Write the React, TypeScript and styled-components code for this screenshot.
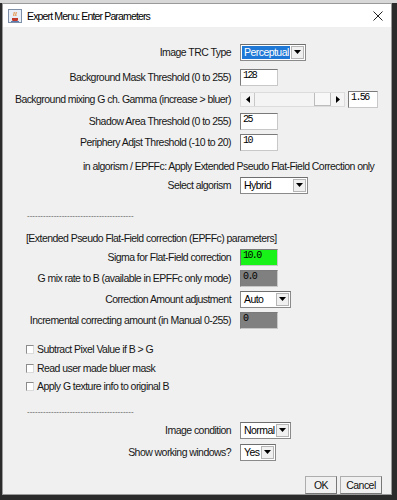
import React from "react";
import styled, { createGlobalStyle } from "styled-components";

const Global = createGlobalStyle`
  html, body { margin: 0; padding: 0; }
  body {
    width: 397px; height: 500px; overflow: hidden;
    background: #2b2b2b;
    font-family: "Liberation Sans", Arial, sans-serif;
  }
`;

const Desktop = styled.div`
  width: 397px;
  height: 500px;
  box-sizing: border-box;
  padding: 3px 5px 5px 2px;
  background: linear-gradient(#d8d8d8 0 3px, #2b2b2b 3px);
`;

const Window = styled.div`
  height: 100%;
  box-sizing: border-box;
  border: 1px solid #9a9a9a;
  background: #f0f0f0;
  display: flex;
  flex-direction: column;
`;

const TitleBar = styled.div`
  height: 24px;
  background: #ffffff;
  display: flex;
  align-items: center;
  padding: 0 8px 0 5px;
  gap: 5px;
  font-size: 10.5px;
  letter-spacing: -0.85px;
  color: #000;
`;

const TitleText = styled.span`
  flex: 1;
`;

const Body = styled.div`
  flex: 1;
  display: flex;
  flex-direction: column;
  padding: 0 9px 0 8px;
  font-size: 10.5px;
  letter-spacing: -0.55px;
  color: #000;
`;

const Row = styled.div<{ $mt: number }>`
  display: grid;
  grid-template-columns: 220px auto;
  column-gap: 9px;
  align-items: center;
  margin-top: ${(p) => p.$mt}px;
  height: 18px;
`;

const Label = styled.span`
  text-align: right;
  white-space: nowrap;
  color: #161616;
`;

const Controls = styled.div`
  display: flex;
  align-items: center;
  gap: 3px;
`;

const TextField = styled.div<{ $bg?: string; $w?: number }>`
  width: ${(p) => p.$w ?? 38}px;
  height: 17px;
  box-sizing: border-box;
  background: ${(p) => p.$bg ?? "#ffffff"};
  border: 1px solid #c8c8c8;
  border-top-color: #7a7a7a;
  border-left-color: #7a7a7a;
  font-family: "Liberation Mono", "DejaVu Sans Mono", monospace;
  font-size: 10px;
  letter-spacing: -1.6px;
  line-height: 12px;
  padding-left: 2px;
  color: #000;
`;

const Combo = styled.div<{ $w: number }>`
  width: ${(p) => p.$w}px;
  height: 17px;
  box-sizing: border-box;
  background: #fff;
  border: 1px solid #8a8a8a;
  border-top-color: #6e6e6e;
  display: flex;
  align-items: stretch;
  padding: 1px;
`;

const ComboValue = styled.span<{ $sel?: boolean }>`
  flex: 1;
  display: flex;
  align-items: center;
  padding-left: 2px;
  background: ${(p) => (p.$sel ? "#1f78d6" : "transparent")};
  color: ${(p) => (p.$sel ? "#ffffff" : "#000")};
  margin-right: 1px;
`;

const ArrowBtn = styled.span`
  width: 13px;
  background: #f0f0f0;
  border: 1px solid #b5b5b5;
  box-sizing: border-box;
  display: flex;
  align-items: center;
  justify-content: center;
`;

const Scroll = styled.div`
  width: 105px;
  height: 15px;
  box-sizing: border-box;
  background: #f4f4f4;
  border: 1px solid #dcdcdc;
  display: flex;
  align-items: stretch;
`;

const ScrollBtn = styled.span`
  width: 13px;
  display: flex;
  align-items: center;
  justify-content: center;
`;

const Track = styled.span`
  flex: 1;
  display: flex;
  justify-content: flex-end;
  border-left: 1px solid #c8c8c8;
`;

const Thumb = styled.span`
  width: 17px;
  background: #f8f8f8;
  border: 1px solid #bcbcbc;
  border-top: none;
  box-sizing: border-box;
`;

const Note = styled.div<{ $mt: number }>`
  margin-top: ${(p) => p.$mt}px;
  padding-left: 72px;
  white-space: nowrap;
  color: #161616;
  height: 16px;
  line-height: 16px;
`;

const Dashes = styled.div<{ $mt: number }>`
  margin-top: ${(p) => p.$mt}px;
  margin-left: 16px;
  font-size: 8px;
  letter-spacing: 0;
  color: #555;
  height: 10px;
  line-height: 10px;
  white-space: nowrap;
`;

const Heading = styled.div<{ $mt: number }>`
  margin-top: ${(p) => p.$mt}px;
  padding-left: 15px;
  white-space: nowrap;
  color: #161616;
  height: 16px;
  line-height: 16px;
`;

const Check = styled.label<{ $mt: number }>`
  margin-top: ${(p) => p.$mt}px;
  display: flex;
  align-items: center;
  gap: 3px;
  padding-left: 15px;
  height: 16px;
  color: #161616;
`;

const Box = styled.span`
  width: 8px;
  height: 9px;
  box-sizing: border-box;
  background: #fff;
  border: 1px solid #8c8c8c;
  border-right-color: #dadada;
  border-bottom-color: #dadada;
`;

const Footer = styled.div`
  display: flex;
  justify-content: flex-end;
  gap: 3px;
  margin-top: 15px;
`;

const Button = styled.div<{ $w: number }>`
  width: ${(p) => p.$w}px;
  height: 18px;
  box-sizing: border-box;
  border: 1px solid #adadad;
  border-right-color: #777;
  border-bottom-color: #777;
  background: #f0f0f0;
  display: flex;
  align-items: center;
  justify-content: center;
  color: #111;
`;

const Arrow = () => (
  <svg width="7" height="4" viewBox="0 0 7 4">
    <path d="M0 0h7L3.5 4z" fill="#000" />
  </svg>
);

const TitleIcon = () => (
  <svg width="14" height="14" viewBox="0 0 14 14">
    <rect x="0.5" y="0.5" width="13" height="13" fill="#e8eef7" stroke="#7f8fa8" />
    <path d="M4 9h6v1.5a2 2 0 0 1-2 2H6a2 2 0 0 1-2-2z" fill="#c0392b" />
    <path d="M6 3c1 1-1 2 0 4M8 3c1 1-1 2 0 4" stroke="#e67e22" strokeWidth="1" fill="none" />
    <rect x="3" y="12" width="8" height="1" fill="#5c7cb0" />
  </svg>
);

const CloseIcon = () => (
  <svg width="10" height="10" viewBox="0 0 10 10">
    <path d="M0.5 0.5l9 9M9.5 0.5l-9 9" stroke="#222" strokeWidth="1" />
  </svg>
);

const ComboBox = ({ value, w, sel }: { value: string; w: number; sel?: boolean }) => (
  <Combo $w={w}>
    <ComboValue $sel={sel}>{value}</ComboValue>
    <ArrowBtn>
      <Arrow />
    </ArrowBtn>
  </Combo>
);

const LeftTri = () => (
  <svg width="4" height="7" viewBox="0 0 4 7">
    <path d="M4 0v7L0 3.5z" fill="#000" />
  </svg>
);
const RightTri = () => (
  <svg width="4" height="7" viewBox="0 0 4 7">
    <path d="M0 0v7L4 3.5z" fill="#000" />
  </svg>
);

const dashes = "-".repeat(40);

export default function App() {
  return (
    <>
      <Global />
      <Desktop>
        <Window>
          <TitleBar>
            <TitleIcon />
            <TitleText>Expert Menu: Enter Parameters</TitleText>
            <CloseIcon />
          </TitleBar>
          <Body>
            <Row $mt={16}>
              <Label>Image TRC Type</Label>
              <Controls>
                <ComboBox value="Perceptual" w={66} sel />
              </Controls>
            </Row>
            <Row $mt={7}>
              <Label>Background Mask Threshold (0 to 255)</Label>
              <Controls>
                <TextField>128</TextField>
              </Controls>
            </Row>
            <Row $mt={4}>
              <Label>Background mixing G ch. Gamma (increase &gt; bluer)</Label>
              <Controls>
                <Scroll>
                  <ScrollBtn>
                    <LeftTri />
                  </ScrollBtn>
                  <Track>
                    <Thumb />
                  </Track>
                  <ScrollBtn>
                    <RightTri />
                  </ScrollBtn>
                </Scroll>
                <TextField $w={30}>1.56</TextField>
              </Controls>
            </Row>
            <Row $mt={4}>
              <Label>Shadow Area Threshold (0 to 255)</Label>
              <Controls>
                <TextField>25</TextField>
              </Controls>
            </Row>
            <Row $mt={3}>
              <Label>Periphery Adjst Threshold (-10 to 20)</Label>
              <Controls>
                <TextField>10</TextField>
              </Controls>
            </Row>
            <Note $mt={7}>in algorism / EPFFc: Apply Extended Pseudo Flat-Field Correction only</Note>
            <Row $mt={2}>
              <Label>Select algorism</Label>
              <Controls>
                <ComboBox value="Hybrid" w={68} />
              </Controls>
            </Row>
            <Dashes $mt={17}>{dashes}</Dashes>
            <Heading $mt={9}>[Extended Pseudo Flat-Field correction (EPFFc) parameters]</Heading>
            <Row $mt={2}>
              <Label>Sigma for Flat-Field correction</Label>
              <Controls>
                <TextField $bg="#19f219">10.0</TextField>
              </Controls>
            </Row>
            <Row $mt={3}>
              <Label>G mix rate to B (available in EPFFc only mode)</Label>
              <Controls>
                <TextField $bg="#808080">0.0</TextField>
              </Controls>
            </Row>
            <Row $mt={3}>
              <Label>Correction Amount adjustment</Label>
              <Controls>
                <ComboBox value="Auto" w={51} />
              </Controls>
            </Row>
            <Row $mt={3}>
              <Label>Incremental correcting amount (in Manual 0-255)</Label>
              <Controls>
                <TextField $bg="#808080">0</TextField>
              </Controls>
            </Row>
            <Check $mt={12}>
              <Box />
              Subtract Pixel Value if B &gt; G
            </Check>
            <Check $mt={3}>
              <Box />
              Read user made bluer mask
            </Check>
            <Check $mt={2}>
              <Box />
              Apply G texture info to original B
            </Check>
            <Dashes $mt={13}>{dashes}</Dashes>
            <Row $mt={4}>
              <Label>Image condition</Label>
              <Controls>
                <ComboBox value="Normal" w={51} />
              </Controls>
            </Row>
            <Row $mt={4}>
              <Label>Show working windows?</Label>
              <Controls>
                <ComboBox value="Yes" w={36} />
              </Controls>
            </Row>
            <Footer>
              <Button $w={32}>OK</Button>
              <Button $w={42}>Cancel</Button>
            </Footer>
          </Body>
        </Window>
      </Desktop>
    </>
  );
}
